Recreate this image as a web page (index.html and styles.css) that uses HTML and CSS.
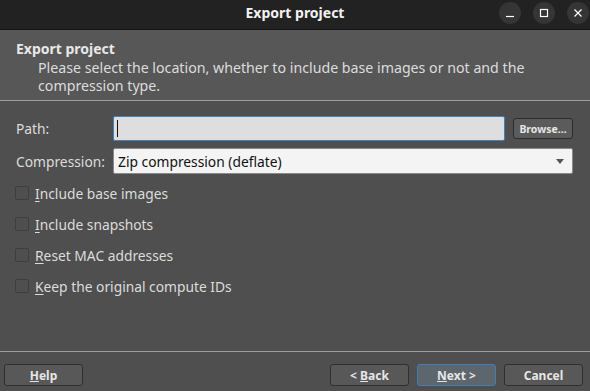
FILE: index.html
```html
<!DOCTYPE html>
<html lang="en">
<head>
    <meta charset="UTF-8">
    <title>Export project</title>
    <link rel="stylesheet" href="styles.css">
</head>
<body>
    <div class="window">
        <div class="titlebar">
            <span class="title">Export project</span>
            <div class="win-buttons">
                <span class="win-btn">
                    <svg width="10" height="10" viewBox="0 0 10 10"><path d="M1 8.5H9" stroke="#fff" stroke-width="1.2"/></svg>
                </span>
                <span class="win-btn">
                    <svg width="10" height="10" viewBox="0 0 10 10"><rect x="1.5" y="1.5" width="7" height="7" fill="none" stroke="#fff" stroke-width="1.2"/></svg>
                </span>
                <span class="win-btn">
                    <svg width="10" height="10" viewBox="0 0 10 10"><path d="M1.5 1.5L8.5 8.5M8.5 1.5L1.5 8.5" stroke="#fff" stroke-width="1.2"/></svg>
                </span>
            </div>
        </div>

        <div class="header">
            <h1>Export project</h1>
            <p>Please select the location, whether to include base images or not and the compression type.</p>
        </div>

        <div class="content">
            <div class="row path-row">
                <label class="field-label">Path:</label>
                <div class="path-input"><span class="caret"></span></div>
                <button class="browse">Browse...</button>
            </div>
            <div class="row">
                <label class="field-label">Compression:</label>
                <div class="combo">
                    <span>Zip compression (deflate)</span>
                    <svg width="8" height="5" viewBox="0 0 8 5"><path d="M0 0H8L4 5Z" fill="#555"/></svg>
                </div>
            </div>

            <div class="checks">
                <div class="check"><span class="box"></span><span><u>I</u>nclude base images</span></div>
                <div class="check"><span class="box"></span><span><u>I</u>nclude snapshots</span></div>
                <div class="check"><span class="box"></span><span><u>R</u>eset MAC addresses</span></div>
                <div class="check"><span class="box"></span><span><u>K</u>eep the original compute IDs</span></div>
            </div>
        </div>

        <div class="footer">
            <button class="btn"><u>H</u>elp</button>
            <div class="spacer"></div>
            <button class="btn">&lt; <u>B</u>ack</button>
            <button class="btn default"><u>N</u>ext &gt;</button>
            <button class="btn">Cancel</button>
        </div>
    </div>
</body>
</html>
```

FILE: styles.css
```css
body {
    margin: 0;
    background-color: #4f4f4f;
    font-family: "Noto Sans", "DejaVu Sans", sans-serif;
}
.window {
    width: 590px;
    height: 391px;
    display: flex;
    flex-direction: column;
    overflow: hidden;
}
.titlebar {
    height: 30px;
    flex: none;
    box-sizing: border-box;
    background-color: #222222;
    border-bottom: 1px solid #151515;
    display: flex;
    align-items: center;
    justify-content: center;
    position: relative;
}
.title {
    color: #f2f2f2;
    font-weight: bold;
    font-size: 14px;
    margin-top: -4px;
}
.win-buttons {
    position: absolute;
    right: 1px;
    top: 2px;
    display: flex;
    gap: 12px;
}
.win-btn {
    width: 22px;
    height: 22px;
    border-radius: 50%;
    background-color: #353535;
    display: flex;
    align-items: center;
    justify-content: center;
}
.header {
    height: 71px;
    flex: none;
    background-color: #575757;
    border-bottom: 1px solid #9c9c9c;
    padding: 0 16px;
    box-sizing: border-box;
}
.header h1 {
    margin: 9px 0 0;
    font-size: 14px;
    font-weight: bold;
    color: #e8e8e8;
    line-height: 20px;
}
.header p {
    margin: 0 0 0 22px;
    font-size: 14.2px;
    color: #dcdcdc;
    line-height: 18px;
    width: 515px;
}
.content {
    flex: 1;
    padding: 15px 17px 0 16px;
}
.row {
    display: flex;
    align-items: center;
    margin-bottom: 7px;
}
.field-label {
    width: 97px;
    flex: none;
    color: #dcdcdc;
    font-size: 13.8px;
}
.path-input {
    flex: 1;
    height: 25px;
    box-sizing: border-box;
    background-color: #dedede;
    border: 1px solid #3d83c4;
    border-radius: 2px;
    display: flex;
    align-items: center;
    padding-left: 3px;
}
.caret {
    width: 1px;
    height: 17px;
    background-color: #111;
}
.browse {
    margin-left: 8px;
    width: 60px;
    height: 21px;
    box-sizing: border-box;
    background-color: #5b5b5b;
    border: 1px solid #2c2c2c;
    border-radius: 3px;
    color: #e6e6e6;
    font-family: inherit;
    font-size: 10.5px;
    font-weight: bold;
    padding: 0;
}
.combo {
    flex: 1;
    height: 26px;
    box-sizing: border-box;
    background-color: #f4f4f4;
    border: 1px solid #8a8a8a;
    border-radius: 2px;
    display: flex;
    align-items: center;
    justify-content: space-between;
    padding: 0 8px 0 4px;
    font-size: 13.8px;
    color: #111;
}
.checks {
    margin-top: 9px;
    display: flex;
    flex-direction: column;
    gap: 11px;
}
.check {
    display: flex;
    align-items: center;
    height: 20px;
    color: #dcdcdc;
    font-size: 13.8px;
}
.check u {
    text-underline-offset: 2px;
}
.box {
    width: 12px;
    height: 12px;
    border: 1px solid #3e3e3e;
    border-radius: 2px;
    margin: 0 6px 0 -1px;
}
.footer {
    flex: none;
    height: 40px;
    box-sizing: border-box;
    border-top: 1px solid #9c9c9c;
    display: flex;
    align-items: flex-start;
    padding: 12px 7px 0 4px;
    gap: 8px;
}
.spacer {
    flex: 1;
}
.btn {
    width: 79px;
    height: 22px;
    box-sizing: border-box;
    background-color: #585858;
    border: 1px solid #2f2f2f;
    border-radius: 3px;
    color: #e6e6e6;
    font-family: inherit;
    font-size: 12px;
    font-weight: bold;
    padding: 0;
}
.btn.default {
    background-color: #5e666d;
    border-color: #3b7fbf;
}
```
